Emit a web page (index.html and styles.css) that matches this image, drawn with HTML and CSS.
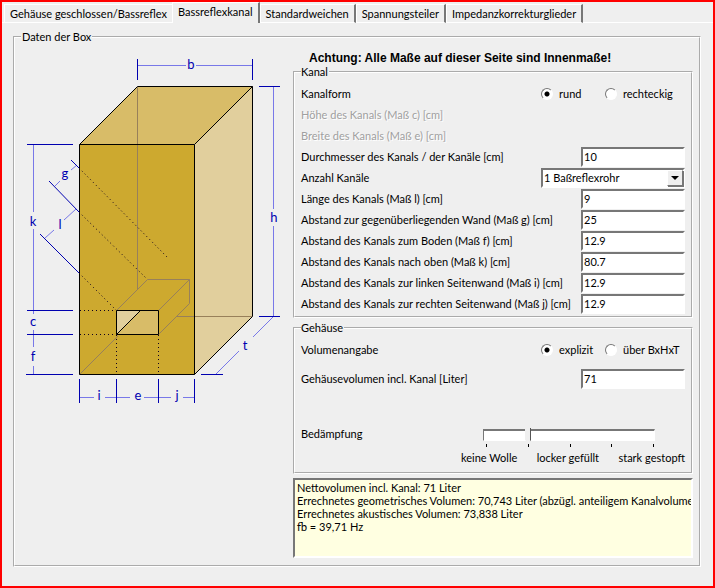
FILE: index.html
```
<!DOCTYPE html>
<html lang="de">
<head>
    <meta charset="UTF-8">
    <meta name="viewport" content="width=device-width, initial-scale=1.0">
    <title>Bassreflexkanal</title>
    <link rel="stylesheet" href="styles.css">
</head>
<body>
    <div class="tabs" role="tablist">
        <button type="button" role="tab" class="tab">Gehäuse geschlossen/Bassreflex</button>
        <button type="button" role="tab" class="tab active" aria-selected="true">Bassreflexkanal</button>
        <button type="button" role="tab" class="tab">Standardweichen</button>
        <button type="button" role="tab" class="tab">Spannungsteiler</button>
        <button type="button" role="tab" class="tab">Impedanzkorrekturglieder</button>
    </div>

    <form class="page">
        <fieldset class="box-data">
            <legend>Daten der Box</legend>
            <div class="columns">
                <svg class="drawing" viewBox="15 44 278 370" role="img" aria-label="Maße der Box">
                    <!-- cabinet -->
                    <path fill="#d8bc68" d="M79.5 144.5 137.5 86.5H252.5L194.5 144.5Z"/>
                    <path fill="#e1cf9d" d="M194.5 144.5 252.5 86.5V316.5L194.5 374.5Z"/>
                    <path fill="#cda92f" d="M79.5 144.5H194.5V374.5H79.5Z"/>
                    <path fill="#d8bc68" d="M116.5 310.5H158.5V334.5H116.5Z"/>
                    <path fill="#e1cf9d" d="M116.5 310.5H140.5L116.5 334.5Z"/>
                    <!-- hidden edges -->
                    <path class="hidden-edge" d="M137.5 87V289M79.5 374.5 118 336M176 316.5H252M116.5 310.5 147.5 279.5H189.5V303.5L158.5 334.5M158.5 310.5 189.5 279.5"/>
                    <!-- visible edges -->
                    <path class="edge" d="M79.5 144.5H194.5V374.5H79.5ZM79.5 144.5 137.5 86.5H252.5V316.5L194.5 374.5M194.5 144.5 252.5 86.5M116.5 310.5H158.5V334.5H116.5ZM116.5 334.5 140.5 310.5"/>
                    <path class="dots" d="M79 168 168 258M79 212 147 279M79 273 116 310M80 310.5H116M80 334.5H116M116.5 335V374M158.5 335V374"/>
                    <!-- dimension lines -->
                    <path class="dim" d="M138 65.5H186M196 65.5H252M273.5 87V209M273.5 226V316M273 317 253 337M239 351 216 374M33.5 145V212M33.5 229V314M33.5 330V347M33.5 366V374M80 397.5H94M105 397.5H130M144 397.5H171M183 397.5H194M77 165 71 170M60 181 55 186M76 209 64 220M54 230 45 238"/>
                    <path class="tick" d="M137.5 59V80M252.5 59V80M259 86.5H280M259 316.5H280M201 374.5H223M27 144.5H73M27 310.5H73M27 334.5H73M26 374.5H73M79.5 379V403M116.5 379V403M158.5 379V403M194.5 379V403M71 160 79 168M49 181 79 212M40 234 79 273"/>
                    <g class="letters">
                        <text x="191" y="69">b</text>
                        <text x="274" y="222">h</text>
                        <text x="245" y="350">t</text>
                        <text x="65" y="178">g</text>
                        <text x="60" y="229">l</text>
                        <text x="33" y="226">k</text>
                        <text x="33" y="326">c</text>
                        <text x="33" y="361">f</text>
                        <text x="99" y="400">i</text>
                        <text x="138" y="400">e</text>
                        <text x="177" y="400">j</text>
                    </g>
                </svg>

                <div class="settings">
                    <h1>Achtung: Alle Maße auf dieser Seite sind Innenmaße!</h1>

                    <fieldset class="group">
                        <legend>Kanal</legend>
                        <div class="row">
                            <span>Kanalform</span>
                            <div class="radios">
                                <label><input type="radio" name="form" checked>rund</label>
                                <label><input type="radio" name="form">rechteckig</label>
                            </div>
                        </div>
                        <div class="row disabled">Höhe des Kanals (Maß c) [cm]</div>
                        <div class="row disabled">Breite des Kanals (Maß e) [cm]</div>
                        <div class="row">
                            <label for="durchmesser">Durchmesser des Kanals / der Kanäle [cm]</label>
                            <input type="text" class="field" id="durchmesser" value="10">
                        </div>
                        <div class="row">
                            <label for="anzahl">Anzahl Kanäle</label>
                            <div class="combo">
                                <select id="anzahl">
                                    <option>1 Baßreflexrohr</option>
                                </select>
                                <span class="arrow"></span>
                            </div>
                        </div>
                        <div class="row">
                            <label for="laenge">Länge des Kanals (Maß l) [cm]</label>
                            <input type="text" class="field" id="laenge" value="9">
                        </div>
                        <div class="row">
                            <label for="wand">Abstand zur gegenüberliegenden Wand (Maß g) [cm]</label>
                            <input type="text" class="field" id="wand" value="25">
                        </div>
                        <div class="row">
                            <label for="boden">Abstand des Kanals zum Boden (Maß f) [cm]</label>
                            <input type="text" class="field" id="boden" value="12.9">
                        </div>
                        <div class="row">
                            <label for="oben">Abstand des Kanals nach oben (Maß k) [cm]</label>
                            <input type="text" class="field" id="oben" value="80.7">
                        </div>
                        <div class="row">
                            <label for="links">Abstand des Kanals zur linken Seitenwand (Maß i) [cm]</label>
                            <input type="text" class="field" id="links" value="12.9">
                        </div>
                        <div class="row">
                            <label for="rechts">Abstand des Kanals zur rechten Seitenwand (Maß j) [cm]</label>
                            <input type="text" class="field" id="rechts" value="12.9">
                        </div>
                    </fieldset>

                    <fieldset class="group housing">
                        <legend>Gehäuse</legend>
                        <div class="row">
                            <span>Volumenangabe</span>
                            <div class="radios">
                                <label><input type="radio" name="volumen" checked>explizit</label>
                                <label><input type="radio" name="volumen">über BxHxT</label>
                            </div>
                        </div>
                        <div class="row">
                            <label for="gehaeuse">Gehäusevolumen incl. Kanal [Liter]</label>
                            <input type="text" class="field" id="gehaeuse" value="71">
                        </div>
                        <div class="damping">
                            <label for="daempfung">Bedämpfung</label>
                            <div class="slider">
                                <input type="range" id="daempfung" min="0" max="4" value="1">
                                <div class="marks"><i></i><i></i><i></i><i></i><i></i></div>
                                <div class="captions">
                                    <span>keine Wolle</span>
                                    <span>locker gefüllt</span>
                                    <span>stark gestopft</span>
                                </div>
                            </div>
                        </div>
                    </fieldset>

                    <textarea class="result" wrap="off" readonly aria-label="Ergebnis">Nettovolumen incl. Kanal: 71 Liter
Errechnetes geometrisches Volumen: 70,743 Liter (abzügl. anteiligem Kanalvolumen)
Errechnetes akustisches Volumen: 73,838 Liter
fb = 39,71 Hz</textarea>
                </div>
            </div>
        </fieldset>
    </form>
</body>
</html>
```

FILE: styles.css
```
* {
    box-sizing: border-box;
}
body {
    margin: 0;
    min-height: 100vh;
    border: 2px solid #f00;
    background: #efefef;
    color: #000;
    display: flex;
    flex-direction: column;
}
body, button, input, select, textarea {
    font-family: Lato, "Liberation Sans", Arial, sans-serif;
    font-size: 11px;
    line-height: 13px;
}

/* tabs */
.tabs {
    display: flex;
    align-items: flex-end;
    height: 21px;
    padding-left: 2px;
    box-shadow: inset 0 -1px #fff;
}
.tab {
    height: 19px;
    padding: 0 5px 1px;
    border: 1px solid #fff;
    border-right: 2px solid #777;
    border-bottom-color: #fff;
    background: #efefef;
    color: #000;
    white-space: nowrap;
}
.tab.active {
    height: 21px;
    padding-bottom: 3px;
    border-bottom: 0;
}
.tab:first-child {
    border-right: 0;
}

/* group boxes */
fieldset {
    min-width: 0;
    margin: 0;
    padding: 0;
    border: 2px groove #fff;
}
legend {
    height: 13px;
    margin-left: 6px;
    padding: 0 1px;
}
.page {
    flex: 1;
    padding: 7px 12px 19px 11px;
}
.columns {
    display: grid;
    grid-template-columns: 278px 1fr;
    padding: 1px 6px 7px 0;
}
.drawing {
    width: 100%;
}
.settings {
    min-width: 0;
    display: flex;
    flex-direction: column;
}
h1 {
    margin: 0;
    padding: 7px 0 0 16px;
    font-family: "Liberation Sans", Arial, sans-serif;
    font-size: 12px;
    line-height: 14px;
}
.group {
    padding: 0 6px 2px;
}
.group legend {
    margin-left: 0;
    padding: 0 1px 0 0;
}
.group > .row:nth-child(2) {
    margin-top: 5px;
}
.row {
    display: flex;
    justify-content: space-between;
    align-items: center;
    height: 21px;
    white-space: nowrap;
}
.disabled {
    color: #a0a0a0;
    text-shadow: 1px 1px #fff;
}
.field {
    width: 104px;
    height: 20px;
    padding: 0 1px;
    border: 2px solid;
    border-color: #777 #fff #fff #777;
    background: #fff;
}
.radios {
    display: grid;
    grid-template-columns: 64px 80px;
}
.radios label {
    display: flex;
    align-items: center;
    gap: 6px;
}
input[type="radio"] {
    appearance: none;
    width: 12px;
    height: 12px;
    margin: 0;
    border: 1px solid;
    border-color: #777 #fff #fff #777;
    border-radius: 50%;
    background: #fff;
}
input[type="radio"]:checked {
    background: radial-gradient(circle, #000 2px, #fff 3px);
}
.combo {
    position: relative;
    width: 144px;
    height: 20px;
}
select {
    appearance: none;
    width: 100%;
    height: 20px;
    padding: 0 18px 0 1px;
    border: 2px solid;
    border-color: #777 #fff #fff #777;
    border-radius: 0;
    background: #fff;
    color: #000;
}
.arrow {
    position: absolute;
    top: 2px;
    right: 2px;
    width: 16px;
    height: 16px;
    border: 1px solid;
    border-color: #fff #777 #777 #fff;
    background: #efefef;
    box-shadow: 1px 1px #777;
    pointer-events: none;
}
.arrow::after {
    content: "";
    display: block;
    margin: 5px 3px;
    border: 4px solid transparent;
    border-top-color: #000;
    border-bottom: 0;
}

/* housing */
.housing {
    margin-top: 3px;
    padding-bottom: 8px;
}
.housing .row + .row {
    margin-top: 8px;
}
.damping {
    display: flex;
    justify-content: space-between;
    padding-top: 38px;
}
.slider {
    width: 224px;
}
input[type="range"] {
    appearance: none;
    display: block;
    width: 172px;
    height: 16px;
    margin: 0 0 0 22px;
    background: transparent;
}
input[type="range"]::-webkit-slider-runnable-track {
    height: 12px;
    border: 1px solid;
    border-color: #777 #fff #fff #777;
    border-top-width: 2px;
    background: #fff;
}
input[type="range"]::-webkit-slider-thumb {
    appearance: none;
    width: 6px;
    height: 15px;
    margin-top: -3px;
    border-right: 1px solid #555;
    background: #efefef;
    clip-path: polygon(0 0, 100% 0, 100% 80%, 60% 100%, 0 80%);
}
.marks {
    display: flex;
    justify-content: space-between;
    width: 168px;
    margin: 1px 0 4px 25px;
}
.marks i {
    width: 1px;
    height: 3px;
    background: #000;
}
.captions {
    display: flex;
    justify-content: space-between;
    white-space: nowrap;
}

.result {
    display: block;
    width: 100%;
    height: 80px;
    margin-top: 4px;
    padding: 1px 2px;
    border: 2px solid;
    border-color: #777 #fff #fff #777;
    background: #ffffe1;
    color: #000;
    overflow: hidden;
    resize: none;
}

/* drawing */
.drawing path {
    stroke-width: 1;
}
.edge, .hidden-edge, .dots, .dim, .tick {
    fill: none;
}
.edge {
    stroke: #000;
}
.hidden-edge {
    stroke: #98805a;
}
.dots {
    stroke: #100020;
    stroke-dasharray: 1 3;
}
.dim {
    stroke: #7878e8;
}
.tick {
    stroke: #0000b0;
}
.letters {
    fill: #0000b0;
    font-size: 13px;
    text-anchor: middle;
}
```
